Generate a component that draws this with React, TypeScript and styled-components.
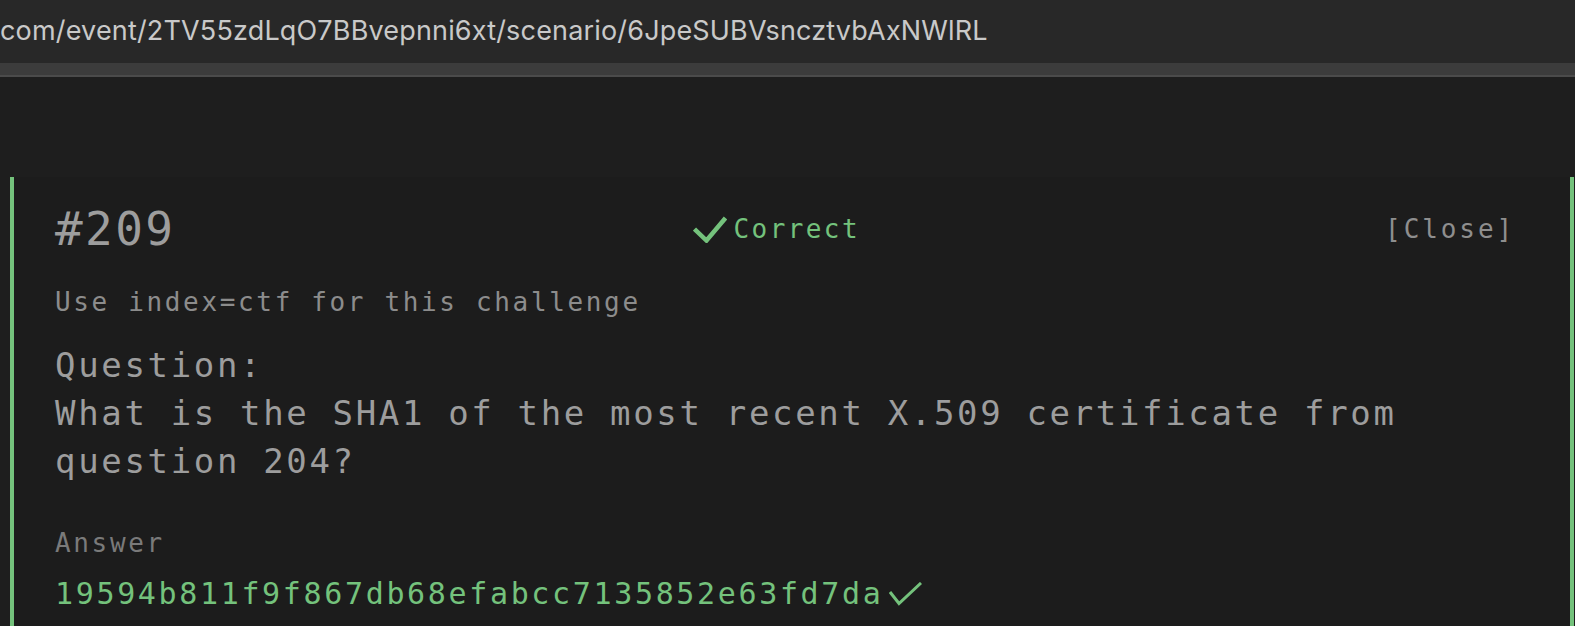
import React from "react";
import styled, { createGlobalStyle } from "styled-components";

const GlobalStyle = createGlobalStyle`
  html, body {
    margin: 0;
    padding: 0;
    background: #1e1e1e;
    overflow: hidden;
  }
  * { box-sizing: border-box; }
`;

const mono = `"DejaVu Sans Mono", "Liberation Mono", monospace`;
const green = "#74c27c";

const Page = styled.div`
  display: flex;
  flex-direction: column;
  height: 100vh;
  background: #1e1e1e;
`;

const AddressBar = styled.div`
  height: 63px;
  flex: none;
  background: #282828;
  display: flex;
  align-items: center;
  padding-left: 0;
  overflow: hidden;
`;

const UrlText = styled.span`
  font-family: Inter, "Liberation Sans", sans-serif;
  font-size: 27px;
  color: #c9c9c9;
  letter-spacing: 0.17px;
  white-space: nowrap;
  margin-top: -3px;
`;

const TabStrip = styled.div`
  height: 14px;
  flex: none;
  background: #3c3c3c;
  border-bottom: 2px solid #4b4b4b;
`;

const Toolbar = styled.div`
  height: 100px;
  flex: none;
  background: #1e1e1e;
`;

const Card = styled.section`
  flex: 1;
  margin: 0 1px 0 10px;
  background: #1c1c1c;
  border-left: 4px solid ${green};
  border-right: 4px solid ${green};
  padding: 29px 55px 0 41px;
  font-family: ${mono};
`;

const Header = styled.div`
  display: flex;
  align-items: center;
  justify-content: space-between;
`;

const Number = styled.div`
  font-size: 46px;
  line-height: 46px;
  letter-spacing: 2.4px;
  color: #9d9d9d;
`;

const Status = styled.div`
  display: flex;
  align-items: center;
  gap: 7px;
  margin-right: 8px;
  font-size: 26px;
  line-height: 36px;
  letter-spacing: 2.4px;
  color: ${green};
`;

const CloseButton = styled.button`
  background: none;
  border: none;
  padding: 0;
  font-family: ${mono};
  font-size: 26px;
  line-height: 36px;
  letter-spacing: 2.9px;
  color: #8e8e8e;
  cursor: pointer;
`;

const Hint = styled.p`
  margin: 32px 0 0;
  font-size: 26px;
  line-height: 36px;
  letter-spacing: 2.65px;
  color: #8c8c8c;
`;

const QuestionBlock = styled.div`
  margin-top: 21px;
  font-size: 34px;
  line-height: 48px;
  letter-spacing: 2.66px;
  color: #9d9d9d;
`;

const QuestionLine = styled.div``;

const AnswerLabel = styled.div`
  margin-top: 40px;
  font-size: 26px;
  line-height: 36px;
  letter-spacing: 2.65px;
  color: #7a7a7a;
`;

const AnswerValue = styled.div`
  margin-top: 13px;
  display: flex;
  align-items: center;
  gap: 6px;
  font-size: 30px;
  line-height: 40px;
  letter-spacing: 2.65px;
  color: ${green};
`;

const CheckIcon = ({ w, h, d, sw }: { w: number; h: number; d: string; sw: number }) => (
  <svg width={w} height={h} viewBox={`0 0 ${w} ${h}`} fill="none">
    <path d={d} stroke={green} strokeWidth={sw} strokeLinecap="butt" strokeLinejoin="miter" />
  </svg>
);

export default function App() {
  return (
    <>
      <GlobalStyle />
      <Page>
        <AddressBar>
          <UrlText>com/event/2TV55zdLqO7BBvepnni6xt/scenario/6JpeSUBVsncztvbAxNWlRL</UrlText>
        </AddressBar>
        <TabStrip />
        <Toolbar />
        <Card>
          <Header>
            <Number>#209</Number>
            <Status>
              <CheckIcon w={34} h={27} d="M1.5 13 L13.5 24.5 L32.5 2" sw={4.5} />
              Correct
            </Status>
            <CloseButton>[Close]</CloseButton>
          </Header>
          <Hint>Use index=ctf for this challenge</Hint>
          <QuestionBlock>
            <QuestionLine>Question:</QuestionLine>
            <QuestionLine>What is the SHA1 of the most recent X.509 certificate from question 204?</QuestionLine>
          </QuestionBlock>
          <AnswerLabel>Answer</AnswerLabel>
          <AnswerValue>
            19594b811f9f867db68efabcc7135852e63fd7da
            <CheckIcon w={33} h={24} d="M1 10 L10 21.5 L32 1" sw={3} />
          </AnswerValue>
        </Card>
      </Page>
    </>
  );
}
